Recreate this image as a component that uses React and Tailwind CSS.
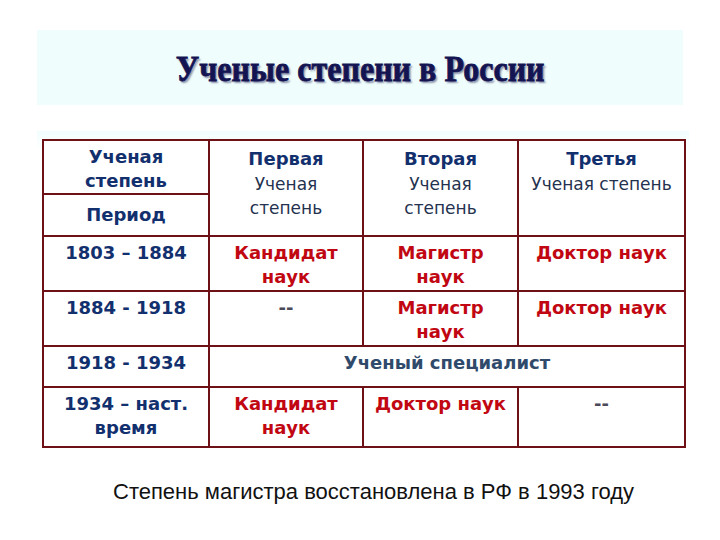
const cell = 'border-2 border-[#6d1117] align-top text-center pt-[4px] px-1';
const navy = 'font-bold text-[#13306e]';
const red = 'font-bold text-[#c10712]';

function Sub({ children }) {
  return <div className="font-normal text-[17px] leading-[24px] text-[#24324f]">{children}</div>;
}

export default function App() {
  return (
    <div className="w-[720px] h-[540px] bg-white font-['DejaVu_Sans',sans-serif] text-[18px] leading-[24px]">
      {/* Title */}
      <div className="pt-[30px] px-[37px]">
        <div className="h-[75px] bg-[#effdfd] flex items-center justify-center">
          <h1 className="font-['Liberation_Serif',serif] font-bold text-[36px] leading-none text-[#141452] scale-x-[0.89] [-webkit-text-stroke:0.8px_#141452] [text-shadow:2px_2px_2px_#8a90a8] mt-[3px]">
            Ученые степени в России
          </h1>
        </div>
      </div>

      {/* Table */}
      <div className="mt-[26px] ml-[37px] w-[652px] pt-[8px] px-[5px] bg-gradient-to-b from-[#f2fdfd] to-white to-[20px]">
        <table className="w-[642px] table-fixed border-collapse bg-white">
          <colgroup>
            <col className="w-[166px]" />
            <col className="w-[154px]" />
            <col className="w-[155px]" />
            <col className="w-[167px]" />
          </colgroup>
          <tbody>
            <tr className="h-[54px]">
              <td className={`${cell} ${navy}`}>Ученая<br />степень</td>
              <td rowSpan={2} className={`${cell} ${navy}`}>
                <div className="leading-[27px]">Первая</div>
                <Sub>Ученая</Sub>
                <Sub>степень</Sub>
              </td>
              <td rowSpan={2} className={`${cell} ${navy}`}>
                <div className="leading-[27px]">Вторая</div>
                <Sub>Ученая</Sub>
                <Sub>степень</Sub>
              </td>
              <td rowSpan={2} className={`${cell} ${navy}`}>
                <div className="leading-[27px]">Третья</div>
                <Sub>Ученая степень</Sub>
              </td>
            </tr>
            <tr className="h-[42px]">
              <td className={`border-2 border-[#6d1117] align-middle text-center ${navy}`}>Период</td>
            </tr>
            <tr className="h-[55px]">
              <td className={`${cell} ${navy}`}>1803 – 1884</td>
              <td className={`${cell} ${red}`}>Кандидат<br />наук</td>
              <td className={`${cell} ${red}`}>Магистр<br />наук</td>
              <td className={`${cell} ${red}`}>Доктор наук</td>
            </tr>
            <tr className="h-[55px]">
              <td className={`${cell} ${navy}`}>1884 - 1918</td>
              <td className={`${cell} font-bold text-[#4a4a5a]`}>--</td>
              <td className={`${cell} ${red}`}>Магистр<br />наук</td>
              <td className={`${cell} ${red}`}>Доктор наук</td>
            </tr>
            <tr className="h-[41px]">
              <td className={`${cell} ${navy}`}>1918 - 1934</td>
              <td colSpan={3} className={`${cell} font-bold text-[#2f4a6b]`}>Ученый специалист</td>
            </tr>
            <tr className="h-[60px]">
              <td className={`${cell} ${navy}`}>1934 – наст.<br />время</td>
              <td className={`${cell} ${red}`}>Кандидат<br />наук</td>
              <td className={`${cell} ${red}`}>Доктор наук</td>
              <td className={`${cell} font-bold text-[#4a4a5a]`}>--</td>
            </tr>
          </tbody>
        </table>
      </div>

      {/* Note */}
      <p className="mt-[31px] ml-[113px] font-['Liberation_Sans',sans-serif] text-[22px] leading-[25px] text-[#111]">
        Степень магистра восстановлена в РФ в 1993 году
      </p>
    </div>
  );
}
